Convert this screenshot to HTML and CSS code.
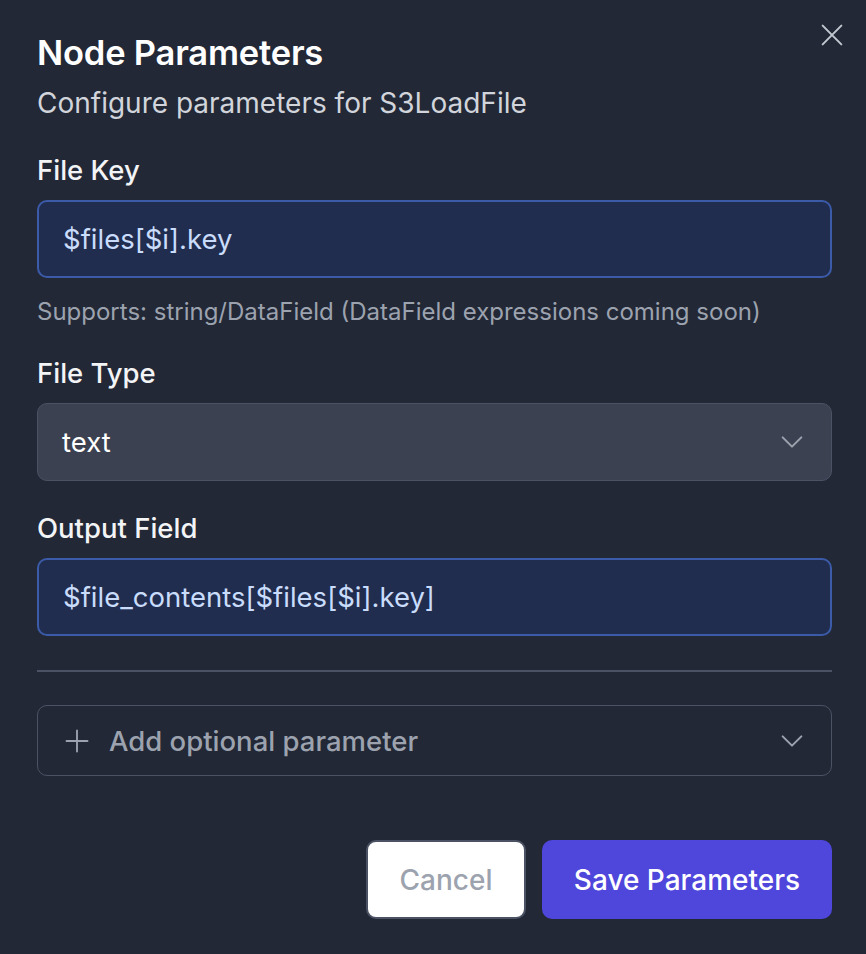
FILE: index.html
```html
<!DOCTYPE html>
<html>
<head>
<meta charset="utf-8">
<link rel="stylesheet" href="styles.css">
</head>
<body>
<div class="dialog">
  <button class="close" aria-label="Close">
    <svg width="28" height="28" viewBox="0 0 24 24" fill="none" stroke="currentColor" stroke-width="1.7" stroke-linecap="round"><path d="M4 4L20 20M20 4L4 20"/></svg>
  </button>
  <h1 class="title">Node Parameters</h1>
  <p class="subtitle">Configure parameters for S3LoadFile</p>

  <div class="field first">
    <label class="label">File Key</label>
    <div class="input">$files[$i].key</div>
    <p class="help">Supports: string/DataField (DataField expressions coming soon)</p>
  </div>

  <div class="field">
    <label class="label">File Type</label>
    <div class="select">
      <span>text</span>
      <svg class="chev" width="32" height="32" viewBox="0 0 24 24" fill="none" stroke="currentColor" stroke-width="1.5" stroke-linecap="round" stroke-linejoin="round"><path d="M5 8.5l7 7 7-7"/></svg>
    </div>
  </div>

  <div class="field">
    <label class="label">Output Field</label>
    <div class="input">$file_contents[$files[$i].key]</div>
  </div>

  <hr class="divider">

  <div class="optional">
    <svg class="plus" width="28" height="28" viewBox="0 0 24 24" fill="none" stroke="currentColor" stroke-width="1.6" stroke-linecap="round"><path d="M12 3v18M3 12h18"/></svg>
    <span class="opt-text">Add optional parameter</span>
    <svg class="chev" width="32" height="32" viewBox="0 0 24 24" fill="none" stroke="currentColor" stroke-width="1.5" stroke-linecap="round" stroke-linejoin="round"><path d="M5 8.5l7 7 7-7"/></svg>
  </div>

  <div class="actions">
    <button class="btn cancel">Cancel</button>
    <button class="btn save">Save Parameters</button>
  </div>
</div>
</body>
</html>
```

FILE: styles.css
```css
html, body {
  margin: 0;
  padding: 0;
  background: #222836;
  height: 100%;
}
body {
  font-family: Inter, "Noto Sans", sans-serif;
  color: #ffffff;
}
.dialog {
  position: relative;
  padding: 33px 34px 0 37px;
}
.close {
  position: absolute;
  top: 21px;
  right: 20px;
  background: none;
  border: none;
  padding: 0;
  color: #c2c7d0;
  cursor: pointer;
}
.title {
  margin: 0;
  font-size: 34.5px;
  line-height: 40px;
  font-weight: 600;
  letter-spacing: -0.2px;
}
.subtitle {
  margin: 14px 0 0;
  font-size: 28px;
  line-height: 32px;
  color: #d1d5db;
}
.field {
  margin-top: 31px;
}
.field.first {
  margin-top: 35px;
}
.label {
  display: block;
  font-size: 27.5px;
  line-height: 32px;
  font-weight: 500;
  color: #f3f4f6;
  margin-bottom: 14px;
}
.input {
  box-sizing: border-box;
  height: 78px;
  border: 2px solid #3b5ba8;
  border-radius: 10px;
  background: #202d4e;
  color: #c9dcfb;
  font-size: 27.5px;
  display: flex;
  align-items: center;
  padding: 0 24px;
}
.help {
  margin: 20px 0 0;
  font-size: 24px;
  line-height: 28px;
  color: #9ca3af;
}
.select {
  box-sizing: border-box;
  height: 78px;
  border: 1.5px solid #4b5263;
  border-radius: 10px;
  background: #3b4150;
  color: #ffffff;
  font-size: 27.5px;
  display: flex;
  align-items: center;
  justify-content: space-between;
  padding: 0 23px 0 24px;
}
.chev {
  color: #9ca3af;
}
.divider {
  border: none;
  border-top: 2px solid #4b5263;
  margin: 34px 0 0;
}
.optional {
  box-sizing: border-box;
  margin-top: 33px;
  height: 71px;
  border: 1.5px solid #4b5263;
  border-radius: 10px;
  display: flex;
  align-items: center;
  padding: 0 23px 0 25px;
  color: #9ca3af;
}
.plus {
  color: #9ca3af;
  margin-right: 18px;
}
.opt-text {
  flex: 1;
  font-size: 27.5px;
  font-weight: 500;
  color: #9ca3af;
}
.actions {
  margin-top: 64px;
  display: flex;
  justify-content: flex-end;
  gap: 16px;
}
.btn {
  font-family: Inter, "Noto Sans", sans-serif;
  font-size: 28px;
  font-weight: 500;
  height: 79px;
  border-radius: 10px;
  cursor: pointer;
}
.cancel {
  width: 160px;
  background: #ffffff;
  color: #9ca3af;
  border: 2px solid #4b5263;
}
.save {
  width: 290px;
  background: #4f46dc;
  color: #ffffff;
  border: none;
}
```
